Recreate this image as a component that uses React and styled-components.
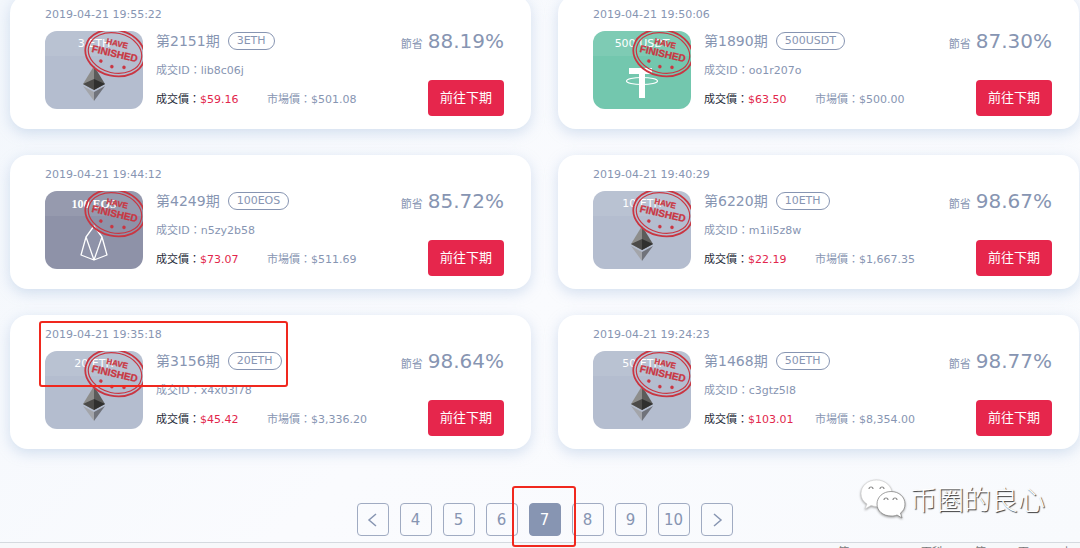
import React from "react";
import styled, { createGlobalStyle } from "styled-components";

const GlobalStyle = createGlobalStyle`
  *, *::before, *::after { box-sizing: border-box; }
  body {
    margin: 0;
    overflow: hidden;
    background: #f8fafd;
    color: #8795b2;
    font: 11px/16px "DejaVu Sans", "Noto Sans CJK TC", sans-serif;
  }
  button { font: inherit; cursor: pointer; }
`;

const Page = styled.div`
  background: linear-gradient(135deg, #f3f7fc 0%, #fafbfe 50%, #f8fafd 100%);
`;

const Grid = styled.main`
  display: grid;
  grid-template-columns: 1fr 1fr;
  gap: 26px 27px;
  margin-top: -5px;
  padding: 0 1px 0 10px;
`;

const Card = styled.article`
  position: relative;
  padding: 12px 27px 13px 35px;
  border-radius: 18px;
  background: #fff;
  box-shadow: 0 4px 14px rgba(150, 180, 215, 0.38);
`;

const Time = styled.time`
  display: block;
  margin-bottom: 8px;
`;

const Body = styled.div`
  display: flex;
  gap: 13px;
`;

const Thumb = styled.div`
  position: relative;
  flex: none;
  width: 98px;
  height: 78px;
  border-radius: 12px;
  overflow: hidden;
  background: ${(p) => p.$color};
  color: #fff;
  text-align: center;

  svg { position: absolute; inset: 0; width: 100%; height: 100%; }
`;

const ThumbLabel = styled.div`
  height: 25px;
  font: ${(p) => (p.$serif ? '700 12px/26px "Liberation Serif", serif' : "inherit")};
  line-height: 26px;
  background: rgba(255, 255, 255, 0.08);
`;

const Info = styled.div`
  display: flex;
  flex: 1;
  flex-direction: column;
  justify-content: space-between;
  height: 77px;
  padding-top: 1px;
`;

const TitleRow = styled.div`
  display: flex;
  align-items: center;
  gap: 8px;
  height: 18px;
`;

const Title = styled.h2`
  margin: 0;
  font-size: 14px;
  font-weight: 400;
  line-height: 18px;
`;

const Badge = styled.span`
  padding: 0 8px;
  border: 1px solid #8795b2;
  border-radius: 9px;
  line-height: 16px;
`;

const Prices = styled.div`
  display: flex;
  color: #252a38;
`;

const Deal = styled.span`
  min-width: 111px;
`;

const Amount = styled.b`
  color: #e2264c;
  font-weight: 400;
`;

const Market = styled.span`
  color: #8795b2;
`;

const Side = styled.div`
  display: flex;
  flex-direction: column;
  align-items: flex-end;
  justify-content: space-between;
  height: 85px;
`;

const Saving = styled.div`
  display: flex;
  align-items: baseline;
  gap: 5px;
`;

const Percent = styled.strong`
  font-size: 20px;
  font-weight: 400;
  line-height: 20px;
`;

const Next = styled.button`
  height: 36px;
  padding: 0 12px;
  border: 0;
  border-radius: 4px;
  background: #e6264c;
  color: #fff;
  font-size: 13px;
`;

const Highlight = styled.span`
  position: absolute;
  z-index: 1;
  border: 2px solid #f0281e;
  border-radius: 3px;
  pointer-events: none;
`;

const CardHighlight = styled(Highlight)`
  top: 6px;
  left: 29px;
  width: 249px;
  height: 66px;
`;

const PageHighlight = styled(Highlight)`
  top: -17px;
  left: -17px;
  width: 64px;
  height: 61px;
`;

const PagerArea = styled.section`
  position: relative;
`;

const Pager = styled.nav`
  display: flex;
  justify-content: center;
  gap: 11px;
  padding: 54px 0 6px 9px;
`;

const PageItem = styled.div`
  position: relative;
  display: flex;
`;

const PageButton = styled.button`
  display: grid;
  place-items: center;
  width: 32px;
  height: 33px;
  padding: 0;
  border: 1px solid ${(p) => (p.$active ? "#8795b2" : "#a0abc2")};
  border-radius: 4px;
  background: ${(p) => (p.$active ? "#8795b2" : "transparent")};
  color: ${(p) => (p.$active ? "#fff" : "#8795b2")};
  font-size: 15px;
`;

const Footer = styled.footer`
  display: flex;
  justify-content: flex-end;
  gap: 32px;
  padding: 2px 8px 4px 0;
  border-top: 1px solid #d5d9df;
  background: #f7f8fa;
  color: #777;
`;

const Watermark = styled.div`
  position: absolute;
  right: 35px;
  bottom: 23px;
  display: flex;
  align-items: center;
  gap: 4px;
  color: #fff;
  font: 300 27px/40px "Noto Sans CJK SC", sans-serif;
  text-shadow: 1px 1px 1px #333;

  svg { filter: drop-shadow(0 1px 1px #999); }
`;

function Eth() {
  return (
    <>
      <path d="M49 35 38 53l11 6z" fill="#8d8d8b" />
      <path d="m49 35 11 18-11 6z" fill="#5c5c5a" />
      <path d="m38 53 11-5v11z" fill="#4c4b49" />
      <path d="m60 53-11-5v11z" fill="#30302f" />
      <path d="m38 55 11 6v9z" fill="#a3a5aa" />
      <path d="m60 55-11 6v9z" fill="#70737b" />
    </>
  );
}

function Eos() {
  return (
    <path
      d="M49 35 41 46 36 64l13 5 13-5-5-18zM41 46l8 23 8-23"
      fill="none"
      stroke="#fff"
      strokeWidth="1.3"
      strokeLinejoin="round"
    />
  );
}

function Usdt() {
  return (
    <>
      <path d="M36 37h23v6h-7v24h-6V43H36z" fill="#fff" />
      <ellipse cx="49" cy="50" rx="15.5" ry="3.5" fill="none" stroke="#fff" strokeWidth="1.2" />
    </>
  );
}

const coins = {
  ETH: { color: "#b4bdcf", Mark: Eth },
  EOS: { color: "#8e92a8", Mark: Eos },
  USDT: { color: "#73c7ae", Mark: Usdt },
};

function Stamp() {
  return (
    <g transform="translate(70 22) rotate(13)" fill="none" stroke="#c93642">
      <ellipse rx="30" ry="23" strokeWidth="1.8" />
      <ellipse rx="27" ry="20" strokeWidth="1.2" />
      <g fill="#c93642" stroke="#c93642" strokeWidth=".3" textAnchor="middle" fontWeight="700" fontFamily="Liberation Sans, sans-serif">
        <text y="-7" fontSize="8">HAVE</text>
        <text y="4" fontSize="10">FINISHED</text>
        <circle cx="-12" cy="11" r="1.6" />
        <circle cx="0" cy="14" r="1.6" />
        <circle cx="12" cy="12" r="1.6" />
      </g>
    </g>
  );
}

const deals = [
  ["19:55:22", "2151", "3", "ETH", "lib8c06j", "59.16", "501.08", "88.19"],
  ["19:50:06", "1890", "500", "USDT", "oo1r207o", "63.50", "500.00", "87.30"],
  ["19:44:12", "4249", "100", "EOS", "n5zy2b58", "73.07", "511.69", "85.72"],
  ["19:40:29", "6220", "10", "ETH", "m1il5z8w", "22.19", "1,667.35", "98.67"],
  ["19:35:18", "3156", "20", "ETH", "x4x03l78", "45.42", "3,336.20", "98.64", true],
  ["19:24:23", "1468", "50", "ETH", "c3gtz5l8", "103.01", "8,354.00", "98.77"],
];

function DealCard({ deal }) {
  const [time, issue, count, coin, id, price, market, saving, marked] = deal;
  const { color, Mark } = coins[coin];
  return (
    <Card>
      <Time>2019-04-21 {time}</Time>
      <Body>
        <Thumb $color={color}>
          <ThumbLabel $serif={coin === "EOS"}>{count} {coin}</ThumbLabel>
          <svg viewBox="0 0 98 78" aria-hidden="true"><Mark /><Stamp /></svg>
        </Thumb>
        <Info>
          <TitleRow>
            <Title>第{issue}期</Title>
            <Badge>{count}{coin}</Badge>
          </TitleRow>
          <div>成交ID：{id}</div>
          <Prices>
            <Deal>成交價：<Amount>${price}</Amount></Deal>
            <Market>市場價：${market}</Market>
          </Prices>
        </Info>
        <Side>
          <Saving>節省<Percent>{saving}%</Percent></Saving>
          <Next type="button">前往下期</Next>
        </Side>
      </Body>
      {marked && <CardHighlight />}
    </Card>
  );
}

function Chevron({ d }) {
  return (
    <svg width="16" height="16" viewBox="0 0 16 16" fill="none" stroke="currentColor" strokeWidth="1.5" aria-hidden="true">
      <path d={d} />
    </svg>
  );
}

export default function App() {
  return (
    <Page>
      <GlobalStyle />
      <Grid>
        {deals.map((deal) => <DealCard key={deal[1]} deal={deal} />)}
      </Grid>
      <PagerArea>
        <Pager aria-label="Pagination">
          <PageButton type="button" aria-label="Previous"><Chevron d="M11 2 4 8l7 6" /></PageButton>
          {[4, 5, 6, 7, 8, 9, 10].map((n) => (
            <PageItem key={n}>
              <PageButton type="button" $active={n === 7}>{n}</PageButton>
              {n === 7 && <PageHighlight />}
            </PageItem>
          ))}
          <PageButton type="button" aria-label="Next"><Chevron d="m5 2 7 6-7 6" /></PageButton>
        </Pager>
        <Watermark>
          <svg width="46" height="40" viewBox="0 0 46 40" aria-hidden="true">
            <path d="M16.500 1C7.500 1 1 7 1 14.500c0 4.500 2 8 6 10.500l-2 5 6-3.500c2 .5 3.500 1 5.500 1 9 0 15.500-6 15.500-13S25.500 1 16.500 1z" fill="#fff" stroke="#ccc" strokeWidth=".6" />
            <path d="M31 12.500c-8 0-14 5.500-14 12.500s6 12 14 12c2 0 4 0 6-1l5 3-1.500-5c3-2 4.500-5 4.500-9 0-7-6-12.500-14-12.500z" fill="#fff" stroke="#888" strokeWidth=".8" />
            <g fill="none" stroke="#888" strokeWidth="1.2">
              <path d="M9 10a2 2 0 0 1 4 0M20 10a2 2 0 0 1 4 0M24 21a2 2 0 0 1 4 0M33 21a2 2 0 0 1 4 0" />
            </g>
          </svg>
          币圈的良心
        </Watermark>
      </PagerArea>
      <Footer><span>答</span><span>C</span><span>百科</span><span>答</span><span>百</span><span>小</span></Footer>
    </Page>
  );
}
